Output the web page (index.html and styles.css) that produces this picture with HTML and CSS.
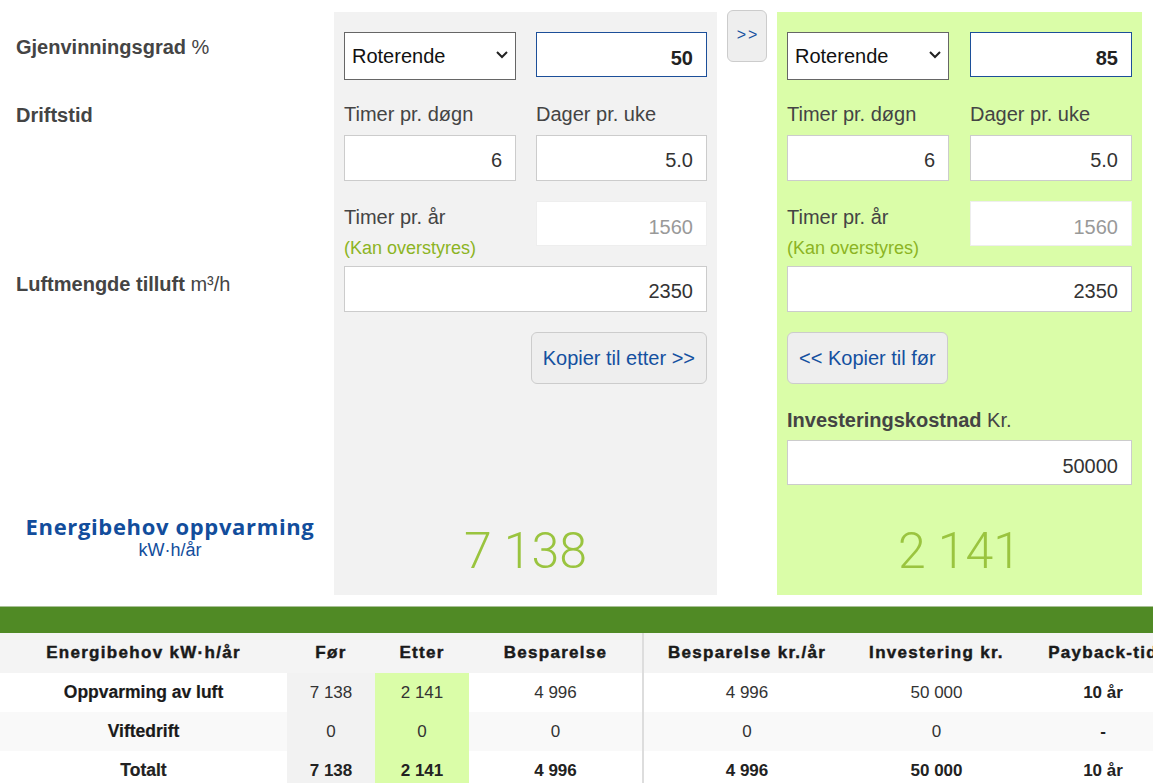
FILE: index.html
```html
<!DOCTYPE html>
<html lang="no">
<head>
<meta charset="utf-8">
<title>Varmegjenvinning – kalkulator</title>
<link rel="stylesheet" href="styles.css">
</head>
<body>
<div class="calc">
  <div class="labels">
    <div class="lbl lbl-gjen"><b>Gjenvinningsgrad</b> %</div>
    <div class="lbl lbl-drift"><b>Driftstid</b></div>
    <div class="lbl lbl-luft"><b>Luftmengde tilluft</b> m³/h</div>
    <div class="energy">
      <div class="energy-title">Energibehov oppvarming</div>
      <div class="energy-unit">kW·h/år</div>
    </div>
  </div>

  <div class="panel panel-before">
    <div class="pair">
      <div class="select-wrap">
        <select class="sel"><option>Roterende</option></select>
        <svg class="chev" width="12" height="8" viewBox="0 0 12 8"><polyline points="1,1 6,6 11,1" fill="none" stroke="#222" stroke-width="2"/></svg>
      </div>
      <input class="field field-focus field-bold" value="50">
    </div>
    <div class="pair cap-row"><div class="cap">Timer pr. døgn</div><div class="cap">Dager pr. uke</div></div>
    <div class="pair field-row"><input class="field" value="6"><input class="field" value="5.0"></div>
    <div class="pair year-row">
      <div class="year-lbl"><div class="cap">Timer pr. år</div><div class="hint">(Kan overstyres)</div></div>
      <input class="field field-ro" value="1560" readonly>
    </div>
    <input class="field field-wide" value="2350">
    <div class="btn-row btn-row-right"><button class="btn">Kopier til etter &gt;&gt;</button></div>
    <div class="big">7 138</div>
  </div>

  <div class="mid"><button class="btn btn-arrow">&gt;&gt;</button></div>

  <div class="panel panel-after">
    <div class="pair">
      <div class="select-wrap">
        <select class="sel"><option>Roterende</option></select>
        <svg class="chev" width="12" height="8" viewBox="0 0 12 8"><polyline points="1,1 6,6 11,1" fill="none" stroke="#222" stroke-width="2"/></svg>
      </div>
      <input class="field field-focus field-bold" value="85">
    </div>
    <div class="pair cap-row"><div class="cap">Timer pr. døgn</div><div class="cap">Dager pr. uke</div></div>
    <div class="pair field-row"><input class="field" value="6"><input class="field" value="5.0"></div>
    <div class="pair year-row">
      <div class="year-lbl"><div class="cap">Timer pr. år</div><div class="hint">(Kan overstyres)</div></div>
      <input class="field field-ro" value="1560" readonly>
    </div>
    <input class="field field-wide" value="2350">
    <div class="btn-row"><button class="btn">&lt;&lt; Kopier til før</button></div>
    <div class="invest-lbl"><b>Investeringskostnad</b> Kr.</div>
    <input class="field field-wide invest-field" value="50000">
    <div class="big">2 141</div>
  </div>
</div>

<div class="bar"></div>

<table class="summary">
  <colgroup>
    <col class="w1"><col class="w2"><col class="w3"><col class="w4"><col class="w5"><col class="w6"><col class="w7">
  </colgroup>
  <thead>
    <tr>
      <th>Energibehov kW·h/år</th>
      <th>Før</th>
      <th>Etter</th>
      <th>Besparelse</th>
      <th class="sep">Besparelse kr./år</th>
      <th>Investering kr.</th>
      <th>Payback-tid</th>
    </tr>
  </thead>
  <tbody>
    <tr>
      <td class="name">Oppvarming av luft</td>
      <td class="c-for">7 138</td>
      <td class="c-etter">2 141</td>
      <td>4 996</td>
      <td class="sep">4 996</td>
      <td>50 000</td>
      <td class="strong">10 år</td>
    </tr>
    <tr class="alt">
      <td class="name">Viftedrift</td>
      <td class="c-for">0</td>
      <td class="c-etter">0</td>
      <td>0</td>
      <td class="sep">0</td>
      <td>0</td>
      <td class="strong">-</td>
    </tr>
    <tr class="total">
      <td class="name">Totalt</td>
      <td class="c-for">7 138</td>
      <td class="c-etter">2 141</td>
      <td>4 996</td>
      <td class="sep">4 996</td>
      <td>50 000</td>
      <td>10 år</td>
    </tr>
  </tbody>
</table>
</body>
</html>
```

FILE: styles.css
```css
* { box-sizing: border-box; }
html { overflow: hidden; }
body {
  margin: 0;
  font-family: "Liberation Sans", Arial, sans-serif;
  color: #444;
  background: #fff;
}

.calc {
  display: flex;
  align-items: flex-start;
  padding-top: 10px;
}

/* left label column */
.labels {
  width: 334px;
  padding-left: 16px;
  display: flex;
  flex-direction: column;
}
.lbl { font-size: 20px; line-height: 24px; color: #444; }
.lbl b { font-weight: 700; }
.lbl-gjen { margin-top: 25px; }
.lbl-drift { margin-top: 44px; }
.lbl-luft { margin-top: 145px; }
.energy {
  margin: 217px 0 0 -10px;
  text-align: center;
  color: #124d9c;
}
.energy-title {
  font-family: "Open Sans", "Liberation Sans", sans-serif;
  font-weight: 700;
  font-size: 22px;
  line-height: 26px;
  letter-spacing: 0.65px;
}
.energy-unit { font-size: 18px; line-height: 22px; }

/* panels */
.panel {
  height: 583px;
  margin-top: 2px;
  padding: 20px 10px 14px;
  display: flex;
  flex-direction: column;
}
.panel-before { width: 383px; background: #f2f2f2; }
.panel-after { width: 365px; background: #dafda8; }

.pair {
  display: grid;
  grid-template-columns: 172px 171px;
  column-gap: 20px;
  align-items: start;
}
.panel-after .pair { grid-template-columns: 162px 162px; column-gap: 21px; }

.select-wrap { position: relative; }
.sel {
  display: block;
  width: 100%;
  height: 48px;
  -webkit-appearance: none;
  appearance: none;
  border: 1px solid #666;
  border-radius: 0;
  background: #fff;
  padding: 0 30px 0 7px;
  font-family: "Liberation Sans", Arial, sans-serif;
  font-size: 20px;
  color: #111;
}
.chev { position: absolute; right: 8px; top: 19px; }

.field {
  display: block;
  width: 100%;
  height: 46px;
  border: 1px solid #ccc;
  border-radius: 0;
  background: #fff;
  padding: 5px 13px 0;
  text-align: right;
  font-family: "Liberation Sans", Arial, sans-serif;
  font-size: 20px;
  color: #333;
  outline: none;
}
.field-focus { height: 45px; border-color: #1c4f99; padding-top: 7px; }
.field-bold { font-weight: 700; color: #222; }
.field-ro { height: 45px; border-color: #eeeeee; color: #999; padding-top: 8px; }
.field-wide { margin-top: 7px; }

.cap-row { margin-top: 23px; }
.cap { font-size: 20px; line-height: 22px; color: #444; }
.field-row { margin-top: 10px; }
.year-row { margin-top: 20px; }
.year-lbl { padding-top: 5px; }
.hint { margin-top: 9px; font-size: 18px; line-height: 22px; color: #8cb423; }

.btn-row { margin-top: 20px; display: flex; }
.btn-row-right { justify-content: flex-end; }
.btn {
  height: 52px;
  padding: 0 11px;
  border: 1px solid #ccc;
  border-radius: 6px;
  background: #eee;
  color: #1450a0;
  font-family: "Liberation Sans", Arial, sans-serif;
  font-size: 20px;
}

.invest-lbl { margin-top: 25px; font-size: 20px; line-height: 22px; color: #444; }
.invest-field { margin-top: 9px; height: 45px; padding-top: 7px; }

.big {
  margin-top: auto;
  text-align: center;
  font-family: Roboto, "Liberation Sans", sans-serif;
  font-weight: 300;
  font-size: 50px;
  line-height: 60px;
  color: #9ac43f;
}

/* middle copy button */
.mid { width: 60px; padding-left: 10px; }
.btn-arrow {
  width: 40px;
  height: 52px;
  padding: 0 0 2px 2px;
  font-size: 16px;
  line-height: 18px;
  letter-spacing: 2px;
}

/* green bar */
.bar {
  margin-top: 11px;
  height: 27px;
  background: #508a25;
  border-top: 1px solid #a9c197;
}

/* summary table */
.summary {
  width: 1183px;
  border-collapse: collapse;
  table-layout: fixed;
  font-size: 17px;
}
.w1 { width: 287px; }
.w2 { width: 88px; }
.w3 { width: 94px; }
.w4 { width: 174px; }
.w5 { width: 207px; }
.w6 { width: 173px; }
.w7 { width: 160px; }

.summary th {
  height: 40px;
  background: #f4f4f4;
  font-weight: 700;
  letter-spacing: 1.3px;
  -webkit-text-stroke: 0.45px #1a1a1a;
  color: #1a1a1a;
  text-align: center;
  padding: 0;
  white-space: nowrap;
}
.summary td {
  height: 39px;
  text-align: center;
  color: #333;
  padding: 0;
}
.summary .alt td { background: #f9f9f9; }
.summary td.name {
  font-weight: 700;
  color: #1a1a1a;
  font-size: 17.5px;
  -webkit-text-stroke: 0.2px #1a1a1a;
}
.summary td.strong { font-weight: 700; color: #222; }
.summary .total td { font-weight: 700; color: #222; }
.summary td.c-for, .summary .alt td.c-for { background: #f2f2f2; }
.summary td.c-etter, .summary .alt td.c-etter { background: #dafda8; }
.summary .sep { border-left: 2px solid #ddd; }
```
